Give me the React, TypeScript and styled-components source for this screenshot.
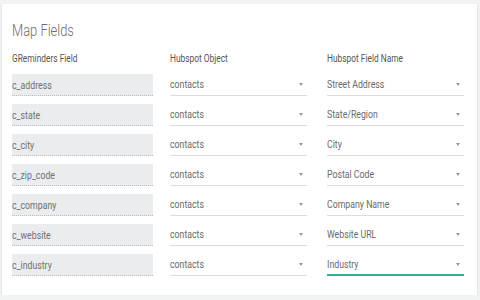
import * as React from 'react';
import styled, { createGlobalStyle } from 'styled-components';

const GlobalStyle = createGlobalStyle`
  html, body {
    margin: 0;
    padding: 0;
    background: #f2f3f3;
  }
  body {
    font-family: Roboto, "Noto Sans", sans-serif;
  }
`;

const Card = styled.div`
  margin: 4px 0 0 2px;
  width: 475px;
  height: 291px;
  box-sizing: border-box;
  background: #fff;
  box-shadow: 0 1px 2px rgba(0, 0, 0, 0.16);
  padding: 14px 11px 0 10px;
`;

// the reference uses a narrow face; squeeze Roboto to match its widths
const Narrow = styled.span`
  display: inline-block;
  white-space: nowrap;
  transform: scaleX(0.76);
  transform-origin: left center;
`;

const Title = styled.h2`
  margin: 0;
  font-size: 17px;
  font-weight: 300;
  color: #6e6e6e;
  line-height: 24px;
`;

const Grid = styled.div`
  display: grid;
  grid-template-columns: 158px 157px 137px;
  row-gap: 8px;
  margin-top: 10px;
`;

const Header = styled.div`
  font-size: 11px;
  color: #555;
  height: 14px;
  line-height: 14px;
`;

const ReadOnly = styled.div`
  width: 141px;
  height: 22px;
  box-sizing: border-box;
  background: #ebecee;
  border-bottom: 1px dotted #bdbdbd;
  font-size: 11.5px;
  line-height: 22px;
  color: #707070;
`;

const Select = styled.div<{ $active?: boolean }>`
  position: relative;
  width: 137px;
  height: 22px;
  box-sizing: border-box;
  border-bottom: ${p => (p.$active ? '2px solid #3bab9b' : '1px solid #dcdcdc')};
  font-size: 11.5px;
  line-height: 21px;
  color: #6a6a6a;
`;

const Caret = styled.span`
  position: absolute;
  right: 4px;
  top: 9px;
  width: 0;
  height: 0;
  border-left: 2.5px solid transparent;
  border-right: 2.5px solid transparent;
  border-top: 3px solid #999;
`;

const rows = [
  ['c_address', 'Street Address'],
  ['c_state', 'State/Region'],
  ['c_city', 'City'],
  ['c_zip_code', 'Postal Code'],
  ['c_company', 'Company Name'],
  ['c_website', 'Website URL'],
  ['c_industry', 'Industry'],
];

export default function App() {
  return (
    <>
      <GlobalStyle />
      <Card>
        <Title><Narrow>Map Fields</Narrow></Title>
        <Grid>
          <Header><Narrow>GReminders Field</Narrow></Header>
          <Header><Narrow>Hubspot Object</Narrow></Header>
          <Header><Narrow>Hubspot Field Name</Narrow></Header>
          {rows.map(([field, name], i) => (
            <React.Fragment key={field}>
              <ReadOnly><Narrow>{field}</Narrow></ReadOnly>
              <Select>
                <Narrow>contacts</Narrow>
                <Caret />
              </Select>
              <Select $active={i === rows.length - 1}>
                <Narrow>{name}</Narrow>
                <Caret />
              </Select>
            </React.Fragment>
          ))}
        </Grid>
      </Card>
    </>
  );
}
